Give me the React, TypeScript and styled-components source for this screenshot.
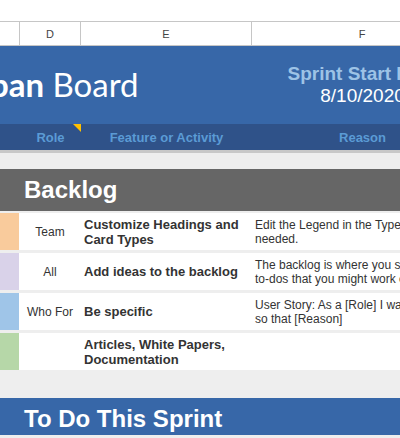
import React from "react";
import styled, { createGlobalStyle } from "styled-components";

const Global = createGlobalStyle`
  html, body { margin: 0; padding: 0; background: #eeeeee; }
  body { width: 400px; height: 438px; overflow: hidden; }
`;

const HEAD_COLS = "20px 61px 171px 221px";
const ROW_COLS = "19px 62px 171px 221px";

const Sheet = styled.div`
  width: 400px;
  height: 438px;
  overflow: hidden;
  background: #eeeeee;
  font-family: "Liberation Sans", Arial, sans-serif;
  color: #333333;
  display: flex;
  flex-direction: column;
`;

const TopStrip = styled.div`
  flex: none;
  height: 21px;
  background: #ffffff;
`;

const ColHeader = styled.div`
  flex: none;
  display: grid;
  grid-template-columns: ${HEAD_COLS};
  height: 25px;
  box-sizing: border-box;
  border-top: 1px solid #c6c6c6;
  border-bottom: 1px solid #c6c6c6;
  background: #ffffff;
`;

const ColLetter = styled.div`
  display: flex;
  align-items: center;
  justify-content: center;
  border-right: 1px solid #c6c6c6;
  font-size: 11px;
  color: #444444;
`;

const TitleArea = styled.div`
  flex: none;
  display: grid;
  grid-template-columns: 252px 221px;
  height: 78px;
  background: #3767a8;
`;

const TitleCell = styled.div`
  overflow: hidden;
  white-space: nowrap;
  padding-top: 22px;
`;

const TitleText = styled.div`
  font-family: Lato, "Open Sans", sans-serif;
  font-size: 33px;
  line-height: 33px;
  color: #ffffff;
  margin-left: -68px;
`;

const TitleBold = styled.span`
  font-weight: 700;
`;

const SprintCell = styled.div`
  display: flex;
  flex-direction: column;
  align-items: center;
  padding-top: 17px;
  white-space: nowrap;
  font-size: 19px;
  line-height: 22px;
`;

const SprintLabel = styled.div`
  font-weight: 700;
  color: #9dc3e6;
`;

const SprintDate = styled.div`
  color: #ffffff;
`;

const Band = styled.div`
  flex: none;
  display: grid;
  grid-template-columns: ${HEAD_COLS};
  height: 26px;
  background: #2f5289;
  border-bottom: 3px solid #c8c8c8;
`;

const BandLabel = styled.div`
  position: relative;
  display: flex;
  align-items: center;
  justify-content: center;
  font-size: 13px;
  font-weight: 700;
  color: #5b9bd5;
  white-space: nowrap;
`;

const CommentMark = styled.span`
  position: absolute;
  top: 0;
  right: 0;
  width: 0;
  height: 0;
  border-top: 8px solid #ffc000;
  border-left: 8px solid transparent;
`;

const SectionBar = styled.div<{ $bg: string; $top: number; $h: number; $pb: number }>`
  flex: none;
  box-sizing: border-box;
  margin-top: ${(p) => p.$top}px;
  height: ${(p) => p.$h}px;
  background: ${(p) => p.$bg};
  display: flex;
  align-items: ${(p) => (p.$pb > 0 ? "flex-end" : "center")};
  padding-left: 24px;
  padding-bottom: ${(p) => p.$pb}px;
  font-size: 24px;
  line-height: 24px;
  font-weight: 700;
  color: #ffffff;
  white-space: nowrap;
`;

const Rows = styled.div`
  flex: none;
  display: flex;
  flex-direction: column;
  gap: 3px;
  padding-top: 2px;
`;

const Row = styled.div`
  display: grid;
  grid-template-columns: ${ROW_COLS};
  height: 37px;
  background: #ffffff;
`;

const Strip = styled.div<{ $color: string }>`
  background: ${(p) => p.$color};
`;

const RoleCell = styled.div`
  display: flex;
  align-items: center;
  justify-content: center;
  font-size: 12px;
  white-space: nowrap;
`;

const FeatureCell = styled.div`
  display: flex;
  flex-direction: column;
  justify-content: center;
  padding-left: 3px;
  font-size: 13px;
  line-height: 15px;
  font-weight: 700;
  white-space: nowrap;
`;

const ReasonCell = styled.div`
  display: flex;
  flex-direction: column;
  justify-content: center;
  padding-left: 3px;
  font-size: 12px;
  line-height: 14px;
  white-space: nowrap;
  overflow: hidden;
`;

type Card = {
  color: string;
  role: string;
  feature: string[];
  reason: string[];
};

const cards: Card[] = [
  {
    color: "#f9cb9c",
    role: "Team",
    feature: ["Customize Headings and", "Card Types"],
    reason: ["Edit the Legend in the Types worksheet as", "needed."],
  },
  {
    color: "#d9d2e9",
    role: "All",
    feature: ["Add ideas to the backlog"],
    reason: ["The backlog is where you store ideas and", "to-dos that you might work on later."],
  },
  {
    color: "#9fc5e8",
    role: "Who For",
    feature: ["Be specific"],
    reason: ["User Story: As a [Role] I want [Feature]", "so that [Reason]"],
  },
  {
    color: "#b6d7a8",
    role: "",
    feature: ["Articles, White Papers,", "Documentation"],
    reason: [],
  },
];

export default function App() {
  return (
    <Sheet>
      <Global />
      <TopStrip />
      <ColHeader>
        <ColLetter />
        <ColLetter>D</ColLetter>
        <ColLetter>E</ColLetter>
        <ColLetter>F</ColLetter>
      </ColHeader>
      <TitleArea>
        <TitleCell>
          <TitleText>
            <TitleBold>Kanban</TitleBold> Board
          </TitleText>
        </TitleCell>
        <SprintCell>
          <SprintLabel>Sprint Start Date</SprintLabel>
          <SprintDate>8/10/2020</SprintDate>
        </SprintCell>
      </TitleArea>
      <Band>
        <BandLabel />
        <BandLabel>
          Role
          <CommentMark />
        </BandLabel>
        <BandLabel>Feature or Activity</BandLabel>
        <BandLabel>Reason</BandLabel>
      </Band>
      <SectionBar $bg="#666666" $top={16} $h={42} $pb={0}>
        Backlog
      </SectionBar>
      <Rows>
        {cards.map((c, i) => (
          <Row key={i}>
            <Strip $color={c.color} />
            <RoleCell>{c.role}</RoleCell>
            <FeatureCell>
              {c.feature.map((l, j) => (
                <div key={j}>{l}</div>
              ))}
            </FeatureCell>
            <ReasonCell>
              {c.reason.map((l, j) => (
                <div key={j}>{l}</div>
              ))}
            </ReasonCell>
          </Row>
        ))}
      </Rows>
      <SectionBar $bg="#3767a8" $top={28} $h={37} $pb={4}>
        To Do This Sprint
      </SectionBar>
    </Sheet>
  );
}
